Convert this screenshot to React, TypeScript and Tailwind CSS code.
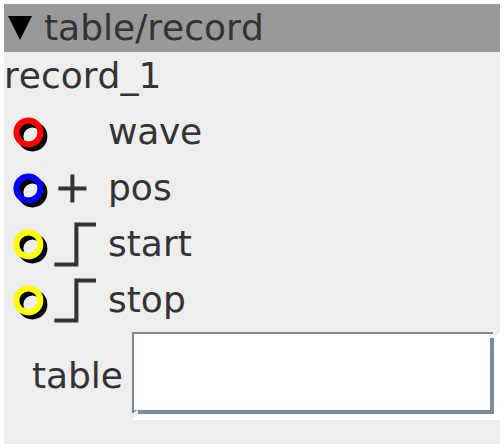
type Signal = 'none' | 'plus' | 'step'

type Inlet = {
  name: string
  color: string
  signal: Signal
  tracking?: string
}

const inlets: Inlet[] = [
  { name: 'wave', color: '#ff0000', signal: 'none', tracking: 'tracking-[-0.25px]' },
  { name: 'pos', color: '#0000ff', signal: 'plus' },
  { name: 'start', color: '#ffff00', signal: 'step' },
  { name: 'stop', color: '#ffff00', signal: 'step' },
]

function Jack({ color }: { color: string }) {
  return (
    <svg width="48" height="56" viewBox="0 0 48 56" fill="none" strokeWidth="6" className="shrink-0">
      <circle cx="28.4" cy="32.4" r="12" stroke="#000" />
      <circle cx="24.4" cy="28.4" r="12" stroke={color} />
    </svg>
  )
}

function SignalIcon({ signal }: { signal: Signal }) {
  return (
    <svg width="56" height="56" viewBox="0 0 56 56" fill="none" stroke="#333" strokeWidth="4" className="shrink-0">
      {signal === 'plus' && <path d="M6.4 28.4h28M20.4 14.4v28" />}
      {signal === 'step' && <path d="M2.4 48.4h24M24.4 50.4v-44M22.4 8.4H44" />}
    </svg>
  )
}

function InletRow({ inlet }: { inlet: Inlet }) {
  return (
    <div className="flex h-14 items-center">
      <Jack color={inlet.color} />
      <SignalIcon signal={inlet.signal} />
      <span className={`leading-[48px] ${inlet.tracking ?? ''}`}>{inlet.name}</span>
    </div>
  )
}

function TableField() {
  return (
    <div className="relative h-[88px] w-[368px] border-r-[6px] border-b-[6px] border-white">
      <div className="h-full w-full border-2 border-r-4 border-b-4 border-[#7a8a99] bg-white" />
      {/* bevel notches where the highlight edge starts */}
      <svg width="8" height="10" viewBox="0 0 8 10" className="absolute bottom-[-6px] left-0">
        <path d="M0 3h2V2l4-2v4L0 10z" fill="#eee" />
      </svg>
      <svg width="10" height="8" viewBox="0 0 10 8" className="absolute top-0 right-[-6px]">
        <path d="M3 0v2H0v4h4L10 0z" fill="#eee" />
      </svg>
    </div>
  )
}

export default function App() {
  return (
    <div className="h-[448px] w-[504px] bg-white p-1 font-['DejaVu_Sans',sans-serif] text-[36px] text-[#333] [font-kerning:none]">
      <div className="h-full bg-[#eee]">
        <div className="flex h-12 items-center bg-[#999]">
          <svg width="40" height="48" viewBox="0 0 40 48" className="shrink-0">
            <path d="M4 12h24L16 36z" fill="#000" />
          </svg>
          <span className="leading-[48px]">table/record</span>
        </div>
        <div className="h-[52px] leading-[48px]">record_1</div>
        {inlets.map((inlet) => (
          <InletRow key={inlet.name} inlet={inlet} />
        ))}
        <div className="mt-1 flex items-center justify-between pl-7">
          <span className="leading-[48px] tracking-[-0.1px]">table</span>
          <TableField />
        </div>
      </div>
    </div>
  )
}
